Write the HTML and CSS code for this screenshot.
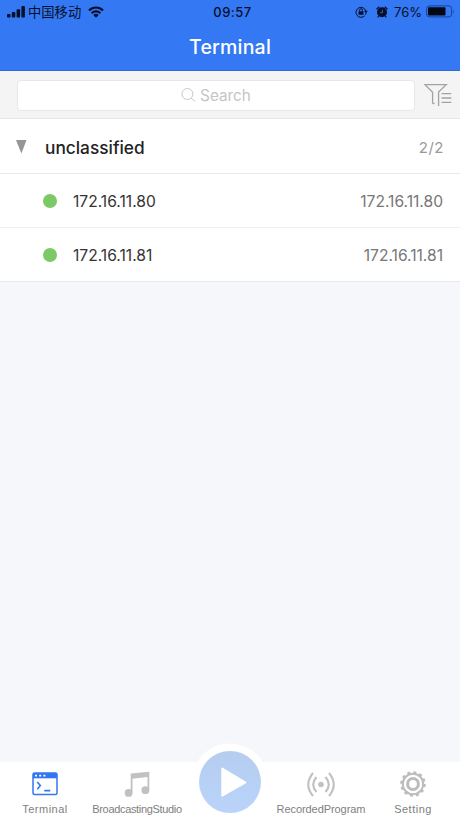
FILE: index.html
```html
<!DOCTYPE html>
<html lang="en">
<head>
<meta charset="utf-8">
<title>Terminal</title>
<link rel="stylesheet" href="styles.css">
</head>
<body>
<div class="app">
  <header class="header">
    <div class="status">
      <div class="status-left">
        <svg class="signal" width="18" height="12" viewBox="0 0 18 12"><rect x="0" y="8" width="3.5" height="3.5" rx="1"/><rect x="4.8" y="6" width="3.5" height="5.5" rx="1"/><rect x="9.6" y="3.3" width="3.5" height="8.2" rx="1"/><rect x="14.4" y="0" width="3.5" height="11.5" rx="1"/></svg>
        <span class="carrier">中国移动</span>
        <svg class="wifi" width="16" height="12" viewBox="0 0 16 12"><g fill="none" stroke="#06102a" stroke-width="2.1"><path d="M1 4.4a10 10 0 0 1 14 0"/><path d="M3.6 7.2a6.3 6.3 0 0 1 8.8 0"/></g><path d="M5.3 9a4 4 0 0 1 5.4 0L8 11.8z"/></svg>
      </div>
      <span class="clock">09:57</span>
      <div class="status-right">
        <svg class="lock" width="13" height="12" viewBox="0 0 13 12"><path d="M9.6 9.8A5 5 0 1 1 10.8 5M11 6.7a5 5 0 0 1-.6 2" fill="none" stroke="#06102a" stroke-width="1"/><path d="M9 4.8h3.8L11 7.2z"/><rect x="3.5" y="5.2" width="5" height="3.6" rx=".5"/><path d="M4.5 5.4V4.3a1.5 1.5 0 0 1 3 0v1.1" fill="none" stroke="#06102a"/></svg>
        <svg class="alarm" width="12" height="12" viewBox="0 0 12 12"><circle cx="6" cy="6.3" r="5"/><path d="M.5 3.3 3.3.8M11.5 3.3 8.7.8M2.8 10 1.7 11.4M9.2 10l1.1 1.4" stroke="#06102a" stroke-width="1.2"/><path d="M6.4 3.8v2.9H4.2" fill="none" stroke="#3478f2" stroke-width=".8"/></svg>
        <span class="percent">76%</span>
        <svg class="battery" width="29" height="13" viewBox="0 0 29 13"><rect x=".6" y=".9" width="25" height="11" rx="2.8" fill="none" stroke="#174195" stroke-width="1"/><rect x="2" y="2.3" width="17.5" height="8.2" rx="1" fill="#020814"/><path d="M27 4.8q1.6 1.6 0 3.4z" fill="#174195"/></svg>
      </div>
    </div>
    <h1 class="title">Terminal</h1>
  </header>
  <div class="search-bar">
    <div class="search">
      <svg width="15" height="16" viewBox="0 0 15 16" fill="none" stroke="#c8c8c8" stroke-width="1"><circle cx="6.4" cy="7" r="5.5"/><path d="m10.4 11 3.4 3.5"/></svg>
      <span class="placeholder">Search</span>
    </div>
    <svg class="filter" width="28" height="24" viewBox="0 0 28 24" fill="none" stroke="#a2a2a2" stroke-width="1.3"><path d="M8.6 20.5V9.2L1 1.6h21.2L14.6 9v14M17.5 10.6h9.8M17.5 15h9.8M17.5 19.4h9.8"/><path d="M8.6 20.5h2"/></svg>
  </div>
  <section class="group">
    <svg class="arrow" width="11" height="14" viewBox="0 0 11 14"><path d="M0 0h10.5L5.4 13.5z" fill="#969696"/></svg>
    <h2 class="group-name">unclassified</h2>
    <span class="count">2/2</span>
  </section>
  <ul class="devices">
    <li class="device"><i class="dot"></i><span class="name">172.16.11.80</span><span class="address">172.16.11.80</span></li>
    <li class="device last"><i class="dot"></i><span class="name">172.16.11.81</span><span class="address">172.16.11.81</span></li>
  </ul>
  <main class="space"></main>
  <nav class="tabs">
    <div class="tab">
      <svg width="26" height="25" viewBox="0 0 26 25"><rect x="1" y="2" width="24" height="21.4" rx="1.5" fill="#fff" stroke="#3277ef" stroke-width="1.5"/><path d="M1 2h24v5.3H1z" fill="#3277ef"/><path d="M3 4.6h2M7.2 4.6h2M11.4 4.6h2" stroke="#fff" stroke-width="1.8"/><path d="m5.3 11 3 3.6-3 3.6M12.3 19.6h6" fill="none" stroke="#3277ef" stroke-width="1.6"/></svg>
      <span class="label label-terminal">Terminal</span>
    </div>
    <div class="tab">
      <svg width="26" height="26" viewBox="0 0 26 26" fill="#c1c1c1"><circle cx="4.6" cy="21.9" r="3.9"/><circle cx="21.4" cy="19.2" r="3.9"/><path d="M6.7 2.6 25.3.8V19.2h-1.8V6L8.5 7.8v14H6.700z"/></svg>
      <span class="label label-studio">BroadcastingStudio</span>
    </div>
    <div class="tab tab-play">
      <svg class="play" width="78" height="78" viewBox="0 0 78 78"><defs><linearGradient id="disc" x1="0" y1="0" x2="0" y2="1"><stop offset="0" stop-color="#b5cdef"/><stop offset="1" stop-color="#bad3fa"/></linearGradient></defs><circle cx="39" cy="39" r="38.5" fill="#fff"/><circle cx="39" cy="39" r="31" fill="url(#disc)"/><path d="M30.3 25.5v27.3q0 1.6 1.4.8L55 40.3q1.2-.8 0-1.6L31.7 24.7Q30.3 23.9 30.3 25.5z" fill="#fff"/></svg>
    </div>
    <div class="tab">
      <svg width="28" height="26" viewBox="0 0 28 26" fill="none" stroke="#c1c1c1" stroke-width="2.1"><circle cx="14" cy="13.5" r="2.8" fill="#c1c1c1" stroke="none"/><path d="M9.5 6q-6.6 7.5 0 15M18.5 6q6.6 7.5 0 15M6 2q-9.5 11.5 0 23M22 2q9.5 11.5 0 23"/></svg>
      <span class="label label-program">RecordedProgram</span>
    </div>
    <div class="tab">
      <svg width="28" height="26" viewBox="0 0 28 26" fill="none" stroke="#bcbcbc"><circle cx="14" cy="13" r="10.2" stroke-width="2"/><circle cx="14" cy="13" r="11.8" stroke-width="2" stroke-dasharray="3 3.178"/><circle cx="14" cy="13" r="5.4" stroke-width="3"/></svg>
      <span class="label label-setting">Setting</span>
    </div>
  </nav>
</div>
</body>
</html>
```
FILE: styles.css
```css
* { box-sizing: border-box; }
body { margin: 0; font-family: Inter, "Noto Sans CJK SC", sans-serif; }
.app { width: 460px; height: 818px; display: flex; flex-direction: column; background: #f5f7fb; overflow: hidden; }
.header { height: 71px; background: #3478f4; border-bottom: 1px solid #3469ce; flex: none; }
.status { height: 23px; display: grid; grid-template-columns: 1fr auto 1fr; align-items: center; padding: 0 5px 0 7px; color: #06102a; fill: #06102a; }
.status-left, .status-right { display: flex; align-items: center; }
.status-right { justify-content: flex-end; }
.carrier { font: 13.3px/20px "Noto Sans CJK SC", sans-serif; margin-left: 3px; }
.wifi { margin-left: 7px; }
.clock { font-size: 13px; font-weight: 500; letter-spacing: .5px; padding-left: 3px; }
.alarm { margin-left: 8px; }
.percent { font-size: 13px; margin: 0 4px 0 6px; }
.title { margin: 0; padding-top: 11px; font-size: 19.5px; font-weight: 500; line-height: 27px; letter-spacing: .2px; color: #fff; text-align: center; }
.search-bar { height: 48px; flex: none; background: #f4f4f4; border-bottom: 1px solid #e5e5e5; display: flex; align-items: center; padding: 1px 8px 0 17px; }
.search { width: 398px; height: 31px; border: 1px solid #e7e7e7; border-radius: 4px; background: #fff; display: flex; align-items: center; justify-content: center; gap: 4px; }
.placeholder { font-size: 15.3px; line-height: 20px; padding-top: 2px; color: #c5c5c5; }
.filter { margin-left: 9px; }
.group { height: 55px; flex: none; background: #fff; border-bottom: 1px solid #e9e9e9; display: flex; align-items: center; padding: 3px 16px 0 16px; }
.arrow { margin-bottom: 1px; }
.group-name { margin: 0 0 0 18px; font-size: 17.3px; font-weight: 500; color: #222; }
.count { margin-left: auto; font-size: 15px; color: #999; letter-spacing: .5px; }
.devices { list-style: none; margin: 0; padding: 0; flex: none; background: #fff; }
.device { height: 54px; border-bottom: 1px solid #f0f0f0; display: flex; align-items: center; padding: 0 17px 0 43px; }
.last { border-color: #e6e8ec; }
.dot { width: 14px; height: 14px; border-radius: 50%; background: #7bca67; }
.name { margin-left: 16px; padding-top: 2px; font-size: 15.6px; color: #333; }
.address { margin-left: auto; padding-top: 2px; font-size: 15.6px; color: #777; }
.space { flex: 1; }
.tabs { height: 56px; flex: none; background: #fff; display: grid; grid-template-columns: repeat(5, 92px); }
.tab { display: flex; flex-direction: column; align-items: center; justify-content: space-between; height: 56px; padding: 9px 2px 2px 0; }
.tab > svg { flex: none; }
.label { font: 11px/14px "Liberation Sans", sans-serif; color: #808080; white-space: nowrap; }
.label-terminal { letter-spacing: .5px; }
.label-studio { letter-spacing: -.33px; }
.label-program { letter-spacing: -.07px; }
.label-setting { letter-spacing: .5px; }
.tab-play { padding: 0; }
.play { margin-top: -19px; }
```
